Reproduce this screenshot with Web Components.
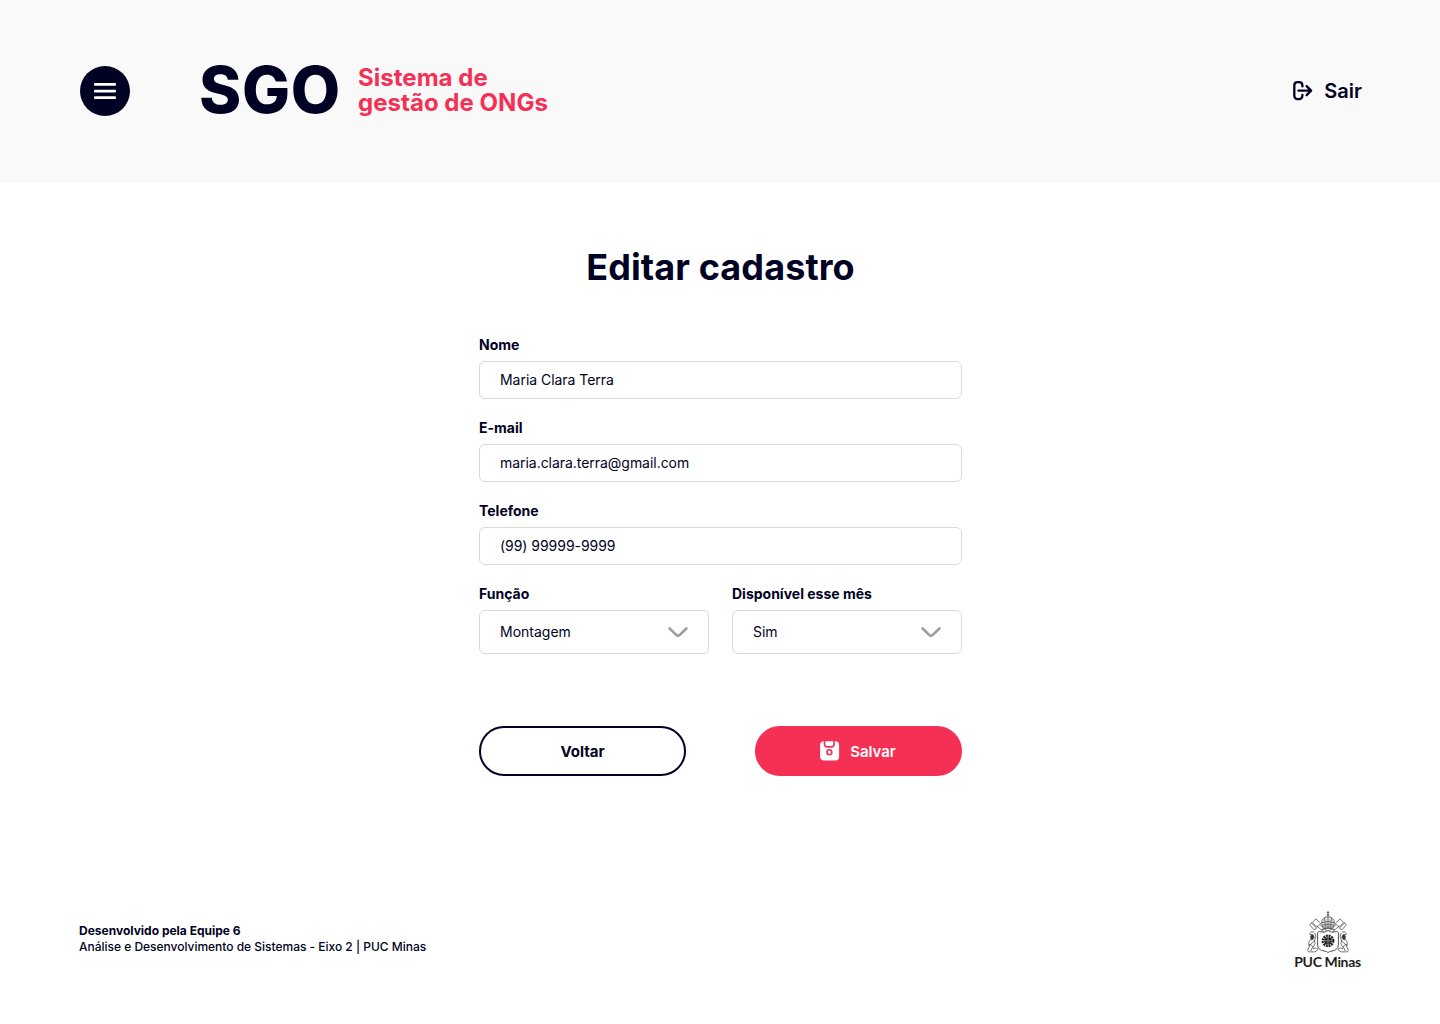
<!DOCTYPE html>
<html lang="pt-BR">
<head>
<meta charset="utf-8">
<title>SGO - Editar cadastro</title>
<style>
html,body{margin:0;height:100%}
body{background:#fff;color:#000223;font-family:Inter,"Liberation Sans",sans-serif;--ink:#000223;--accent:#f53055}
</style>
</head>
<body>
<sgo-app></sgo-app>
<script>
const define = (name, html) => {
  const t = document.createElement('template');
  t.innerHTML = html;
  customElements.define(name, class extends HTMLElement {
    constructor() {
      super();
      this.attachShadow({mode: 'open'}).append(t.content.cloneNode(true));
    }
  });
};

define('sgo-menu-button', `
<style>
:host{display:block;width:50px;height:50px}
button{all:unset;display:grid;place-items:center;width:50px;height:50px;border-radius:50%;background:var(--ink);cursor:pointer}
svg{display:block}
</style>
<button aria-label="Menu"><svg width="50" height="50" viewBox="0 0 50 50" fill="#fff"><rect x="14" y="17" width="22" height="2.7" rx="1"/><rect x="14" y="23.7" width="22" height="2.7" rx="1"/><rect x="14" y="30.2" width="22" height="2.7" rx="1"/></svg></button>`);

define('sgo-brand', `
<style>
:host{display:flex;align-items:center;gap:18px}
.name{font-size:64px;font-weight:800;line-height:50px;width:141px;margin-left:-3px;letter-spacing:.7px;padding-bottom:2px;white-space:nowrap}
.tag{font-size:24px;font-weight:700;line-height:25px;letter-spacing:.03px;color:var(--accent);white-space:nowrap;padding-bottom:2px}
</style>
<div class="name"><slot></slot></div><div class="tag"><slot name="tag"></slot></div>`);

define('sgo-logout', `
<style>
:host{display:flex;align-items:center;gap:11px;font-size:20px;font-weight:600;line-height:24px}
svg{display:block}
</style>
<svg width="20" height="20" viewBox="0 0 20 20" fill="none" stroke="#000223" stroke-width="2.3" stroke-linecap="round" stroke-linejoin="round"><path d="M9.4 5.4V4.4A3.3 3.3 0 0 0 6.1 1.2H4.6A3.3 3.3 0 0 0 1.3 4.4V14.8A3.3 3.3 0 0 0 4.6 18.1H6.1A3.3 3.3 0 0 0 9.4 14.8V13.8M5.4 9.6H17.8M13.6 5.1L18.1 9.6L13.6 14.1"/></svg><slot></slot>`);

define('sgo-header', `
<style>
:host{display:flex;align-items:center;box-sizing:border-box;height:183px;padding:0 78px 1px 80px;background:#f9f9f9}
sgo-brand{margin-left:72px}
sgo-logout{margin-left:auto}
</style>
<sgo-menu-button></sgo-menu-button>
<sgo-brand>SGO<span slot="tag">Sistema de<br>gestão de ONGs</span></sgo-brand>
<sgo-logout>Sair</sgo-logout>`);

define('sgo-field', `
<style>
:host{display:block}
.label{font-size:14px;font-weight:700;line-height:17px;margin-bottom:8px}
.box{box-sizing:border-box;height:38px;border:1px solid #d9d9d9;border-radius:6px;padding:0 20px 2px;display:flex;align-items:center;font-size:14px;letter-spacing:-.04px;background:#fff;line-height:17px}
</style>
<div class="label"><slot name="label"></slot></div><div class="box"><slot></slot></div>`);

define('sgo-select', `
<style>
:host{display:block}
.label{font-size:14px;font-weight:700;line-height:17px;margin-bottom:8px}
.box{box-sizing:border-box;height:44px;border:1px solid #d9d9d9;border-radius:6px;padding:0 20px 2px;display:flex;align-items:center;justify-content:space-between;font-size:14px;background:#fff;line-height:17px}
svg{display:block;margin-top:2px}
</style>
<div class="label"><slot name="label"></slot></div><div class="box"><slot></slot><svg width="20" height="12" viewBox="0 0 20 12" fill="none" stroke="#9d9d9d" stroke-width="2.6" stroke-linecap="round" stroke-linejoin="round"><path d="M1.6 2.5L8.2 8.9Q10 10.6 11.8 8.9L18.4 2.5"/></svg></div>`);

define('sgo-button', `
<style>
:host{display:block;width:207px;height:50px}
button{all:unset;box-sizing:border-box;width:100%;height:100%;border:2px solid var(--ink);border-radius:25px;display:flex;align-items:center;justify-content:center;gap:10px;padding-top:2px;font-size:15px;font-weight:700;line-height:20px;color:var(--ink);cursor:pointer}
:host([primary]) button{background:var(--accent);border-color:var(--accent);color:#fff;font-weight:600;padding-right:1px}
</style>
<button><slot name="icon"></slot><span><slot></slot></span></button>`);

define('sgo-form', `
<style>
:host{display:flex;flex-direction:column;align-items:center}
h1{margin:0;font-size:36px;font-weight:700;line-height:44px;letter-spacing:.1px}
form{width:483px;margin-top:47px;display:flex;flex-direction:column;gap:20px}
.row{display:grid;grid-template-columns:230px 230px;justify-content:space-between}
.actions{display:flex;justify-content:space-between;margin-top:52px}
svg{display:block;margin-top:-3px}
</style>
<h1>Editar cadastro</h1>
<form>
<sgo-field><span slot="label">Nome</span>Maria Clara Terra</sgo-field>
<sgo-field><span slot="label">E-mail</span>maria.clara.terra@gmail.com</sgo-field>
<sgo-field><span slot="label">Telefone</span>(99) 99999-9999</sgo-field>
<div class="row">
<sgo-select><span slot="label">Função</span>Montagem</sgo-select>
<sgo-select><span slot="label">Disponível esse mês</span>Sim</sgo-select>
</div>
<div class="actions">
<sgo-button>Voltar</sgo-button>
<sgo-button primary><svg slot="icon" width="20" height="20" viewBox="0 0 20 20"><rect x=".1" y=".2" width="19" height="19.2" rx="4" fill="#fff"/><g fill="none" stroke="#f53055" stroke-width="1.6"><path d="M4.5 0V2.9A3 3 0 0 0 7.5 5.9H11.1A3 3 0 0 0 14.1 2.9V0"/><circle cx="9.4" cy="11.2" r="2.4"/></g></svg>Salvar</sgo-button>
</div>
</form>`);

define('puc-logo', `
<style>
:host{display:flex;flex-direction:column;align-items:center;width:67px;color:#1d1d1b}
svg{display:block}
.t{font:700 14px/16px Lato,"Open Sans",sans-serif;letter-spacing:-.35px;white-space:nowrap;margin-top:-1px}
</style>
<svg width="44" height="44" viewBox="0 0 44 44" fill="none" stroke="#555" stroke-width=".8">
<path d="M22 0V4M20.6 1.4H23.4"/><circle cx="22" cy="4" r="1"/>
<path d="M15.6 12.2C15.2 8 18.5 5.8 22 5.6C25.5 5.8 28.8 8 28.4 12.2L27.2 16.2H16.8Z" fill="#ddd"/>
<path d="M15.8 11.6Q22 9.4 28.2 11.6M16.4 14.2Q22 12.4 27.6 14.2M18.4 7.2L19.6 16M25.6 7.2L24.4 16M22 6V16"/>
<path d="M15.5 18.8Q22 15.4 28.5 18.8" stroke-width="1.1"/>
<path d="M5.2 11.6L10.8 17.2M3.9 14L8 18.8L10.8 17.2M5.6 11.4L3.7 14.2M9.8 7.8L14.8 12.6L10.8 16.2L6.4 11.6ZM10.8 15L18.5 21.6M13.8 13.6L21.3 20.4"/>
<path d="M38.8 11.6L33.2 17.2M40.1 14L36 18.8L33.2 17.2M38.4 11.4L40.3 14.2M34.2 7.8L29.2 12.6L33.2 16.2L37.6 11.6ZM33.2 15L25.5 21.6M30.2 13.6L22.7 20.4"/>
<path d="M11.6 23Q11.2 19.6 15 20.8Q18.4 22.4 22 19.4Q25.6 22.4 29 20.8Q32.8 19.6 32.4 23V34Q31.8 39.4 26 40Q23.2 40.2 22 41.6Q20.8 40.2 18 40Q12.2 39.4 11.6 34Z" fill="#fff" stroke-width="1"/>
<circle cx="22" cy="29.8" r="4.7" stroke="#222" stroke-width="3.4" stroke-dasharray="1.75 .71"/><circle cx="22" cy="29.8" r="3.4" fill="#222" stroke="none"/><path d="M17 29.8H27M22 25.4V34.2" stroke="#aaa" stroke-width=".7"/>
<path d="M8.5 21Q4.6 20 3.4 22.8L5.4 24.2M35.5 21Q39.4 20 40.6 22.8L38.6 24.2"/>
<path d="M5.6 23.2Q8.8 24 7.8 27.6L5.2 29Q3.6 26 5.6 23.2ZM38.4 23.2Q35.2 24 36.2 27.6L38.8 29Q40.4 26 38.4 23.2Z" fill="#333"/>
<path d="M9 22Q11 26 8.4 30Q4 32.6 2 38Q1 41.6 4.6 40.8Q9.4 42.2 12.4 38.4M7.8 29Q10.4 32 8 35Q5.6 36.6 4.8 40M3 33.6Q6.4 33 7.4 37.8Q10 36 12 38M4.4 28.4Q1.8 31 3 35.6" />
<path d="M35 22Q33 26 35.6 30Q40 32.6 42 38Q43 41.6 39.4 40.8Q34.6 42.2 31.6 38.4M36.2 29Q33.6 32 36 35Q38.4 36.6 39.2 40M41 33.6Q37.6 33 36.6 37.8Q34 36 32 38M39.6 28.4Q42.2 31 41 35.6"/>
</svg>
<div class="t">PUC Minas</div>`);

define('sgo-footer', `
<style>
:host{display:flex;align-items:flex-start;justify-content:space-between;padding:0 79px}
.text{font-size:12px;line-height:16px;padding-top:12px}
b{font-weight:700}
span{font-weight:500;letter-spacing:-.015px}
</style>
<div class="text"><b>Desenvolvido pela Equipe 6</b><br><span>Análise e Desenvolvimento de Sistemas - Eixo 2 | PUC Minas</span></div>
<puc-logo></puc-logo>`);

define('sgo-app', `
<style>
:host{display:flex;flex-direction:column;box-sizing:border-box;min-height:1024px;padding-bottom:54px}
sgo-form{margin-top:62px;padding-left:1px}
sgo-footer{margin-top:auto}
</style>
<sgo-header></sgo-header><sgo-form></sgo-form><sgo-footer></sgo-footer>`);
</script>
</body>
</html>
